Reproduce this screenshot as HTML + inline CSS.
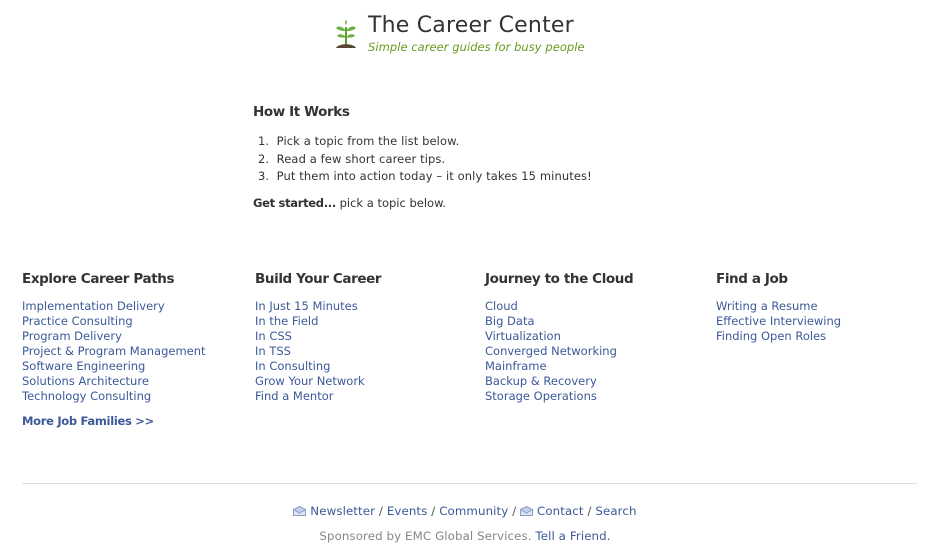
<!DOCTYPE html>
<html><head><meta charset="utf-8"><style>
body{margin:0;width:930px;height:552px;background:#fff;font-family:"DejaVu Sans","Liberation Sans",sans-serif;color:#333;position:relative;overflow:hidden}
.a{position:absolute}
a{color:#3b5998;text-decoration:none}
h3{margin:0;font-size:13.5px;font-weight:bold;color:#333;letter-spacing:-0.4px}
.col{position:absolute;top:272px;font-size:11.5px;line-height:15px;letter-spacing:0px}
.col h3{margin-bottom:12px}
.col a{display:block}
</style></head><body>
<svg class="a" style="left:334px;top:19px" width="24" height="30" viewBox="0 0 24 30">
<path d="M12 27 V8" stroke="#5a9a2a" stroke-width="2" fill="none"/>
<path d="M12 12 C8 6 3 7 2 9 C5 12 9 12 12 12Z" fill="#6ab040"/>
<path d="M12 12 C16 6 21 7 22 9 C19 12 15 12 12 12Z" fill="#6ab040"/>
<path d="M12 18 C8 14 4 15 3 17 C6 19 9 19 12 18Z" fill="#6ab040"/>
<path d="M12 18 C16 14 20 15 21 17 C18 19 15 19 12 18Z" fill="#6ab040"/>
<path d="M12 6 C10 3 12 1 12 1 C12 1 14 3 12 6Z" fill="#6ab040"/>
<path d="M2 29 C4 24 20 24 22 29Z" fill="#5a4530"/>
</svg>
<div class="a" style="left:368px;top:13px;font-size:22px;color:#333;letter-spacing:0.2px">The Career Center</div>
<div class="a" style="left:368px;top:40px;font-size:11.5px;font-style:italic;color:#6a9a1f;letter-spacing:0.05px">Simple career guides for busy people</div>

<div class="a" style="left:253px;top:104px;font-size:13.5px;font-weight:bold;letter-spacing:-0.4px">How It Works</div>
<div class="a" style="left:258px;top:133px;font-size:11.5px;line-height:17.5px;letter-spacing:0.1px">
1.&nbsp; Pick a topic from the list below.<br>
2.&nbsp; Read a few short career tips.<br>
3.&nbsp; Put them into action today – it only takes 15 minutes!</div>
<div class="a" style="left:253px;top:196px;font-size:11.5px"><b style="letter-spacing:-0.3px">Get started...</b> pick a topic below.</div>

<div class="col" style="left:22px"><h3>Explore Career Paths</h3>
<a>Implementation Delivery</a><a>Practice Consulting</a><a>Program Delivery</a><a>Project &amp; Program Management</a><a>Software Engineering</a><a>Solutions Architecture</a><a>Technology Consulting</a>
<a style="margin-top:10px;font-weight:bold;letter-spacing:-0.3px">More Job Families &gt;&gt;</a></div>
<div class="col" style="left:255px"><h3>Build Your Career</h3>
<a>In Just 15 Minutes</a><a>In the Field</a><a>In CSS</a><a>In TSS</a><a>In Consulting</a><a>Grow Your Network</a><a>Find a Mentor</a></div>
<div class="col" style="left:485px"><h3>Journey to the Cloud</h3>
<a>Cloud</a><a>Big Data</a><a>Virtualization</a><a>Converged Networking</a><a>Mainframe</a><a>Backup &amp; Recovery</a><a>Storage Operations</a></div>
<div class="col" style="left:716px"><h3>Find a Job</h3>
<a>Writing a Resume</a><a>Effective Interviewing</a><a>Finding Open Roles</a></div>

<div class="a" style="left:22px;top:483px;width:895px;height:1px;background:#ddd"></div>
<div class="a" style="left:0;width:930px;top:504px;text-align:center;font-size:11.8px;color:#555;letter-spacing:0.1px">
<svg width="13" height="10" viewBox="0 0 13 10" style="vertical-align:-1px"><rect x=".5" y="3.5" width="12" height="6" fill="#dde4f2" stroke="#8a9cc8"/><path d="M.5 3.5 L6.5 .5 L12.5 3.5 L6.5 7Z" fill="#c5d0ea" stroke="#8a9cc8"/></svg>
<a>Newsletter</a> / <a>Events</a> / <a>Community</a> /
<svg width="13" height="10" viewBox="0 0 13 10" style="vertical-align:-1px"><rect x=".5" y="3.5" width="12" height="6" fill="#dde4f2" stroke="#8a9cc8"/><path d="M.5 3.5 L6.5 .5 L12.5 3.5 L6.5 7Z" fill="#c5d0ea" stroke="#8a9cc8"/></svg>
<a>Contact</a> / <a>Search</a></div>
<div class="a" style="left:0;width:930px;top:529px;text-align:center;font-size:11.8px;color:#888;letter-spacing:0.1px">Sponsored by EMC Global Services. <a>Tell a Friend.</a></div>
</body></html>
